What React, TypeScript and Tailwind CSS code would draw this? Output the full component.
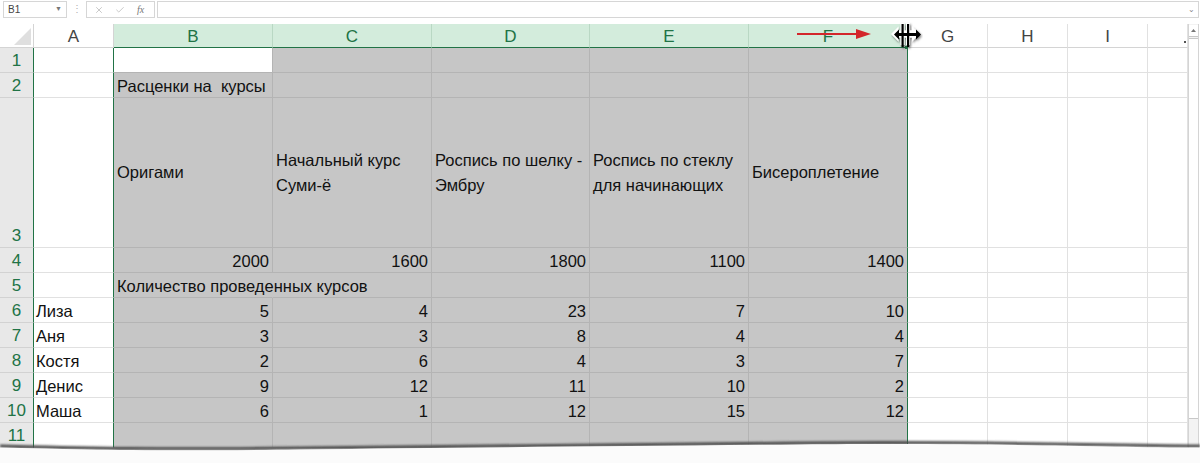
import React from 'react';
import { X, Check } from 'lucide-react';

type Align = 'left' | 'right';

interface RowData {
  n: number;
  tall?: boolean;
  a?: string;
  cells: (string | string[] | number | null)[];
  overflow?: boolean;
}

const ROWS: RowData[] = [
  { n: 1, cells: [null, null, null, null, null] },
  { n: 2, cells: ['Расценки на  курсы', null, null, null, null] },
  {
    n: 3,
    tall: true,
    cells: [
      ['Оригами'],
      ['Начальный курс', 'Суми-ё'],
      ['Роспись по шелку -', 'Эмбру'],
      ['Роспись по стеклу', 'для начинающих'],
      ['Бисероплетение'],
    ],
  },
  { n: 4, cells: [2000, 1600, 1800, 1100, 1400] },
  { n: 5, cells: ['Количество проведенных курсов', null, null, null, null], overflow: true },
  { n: 6, a: 'Лиза', cells: [5, 4, 23, 7, 10] },
  { n: 7, a: 'Аня', cells: [3, 3, 8, 4, 4] },
  { n: 8, a: 'Костя', cells: [2, 6, 4, 3, 7] },
  { n: 9, a: 'Денис', cells: [9, 12, 11, 10, 2] },
  { n: 10, a: 'Маша', cells: [6, 1, 12, 15, 12] },
  { n: 11, cells: [null, null, null, null, null] },
];

// selected columns B..F, D is a pixel narrower
const SEL_COLS = [
  { key: 'B', w: 'w-[159px]' },
  { key: 'C', w: 'w-[159px]' },
  { key: 'D', w: 'w-[158px]' },
  { key: 'E', w: 'w-[159px]' },
  { key: 'F', w: 'w-[159px]' },
];
const FREE_COLS = [
  { key: 'G', w: 'w-[80px]' },
  { key: 'H', w: 'w-[80px]' },
  { key: 'I', w: 'w-[80px]' },
  { key: '', w: 'w-[40px]' },
];

const TopBar = () => (
  <div className="flex h-[24px] items-start bg-white">
    <div className="ml-[3px] mt-[1px] flex h-[17px] w-[64px] items-center justify-between border border-[#d6d6d6] px-[4px] text-[10px] text-[#444]">
      <span>B1</span>
      <span className="text-[7px] text-[#777]">▼</span>
    </div>
    <div className="mt-[2px] w-[19px] text-center text-[10px] leading-[14px] text-[#b0b0b0]">⋮</div>
    <div className="mt-[1px] flex h-[17px] w-[69px] items-center border border-[#d6d6d6] text-[#a8a8a8]">
      <X className="ml-[7px] h-[10px] w-[10px]" strokeWidth={1.5} />
      <Check className="ml-[11px] h-[10px] w-[10px]" strokeWidth={1.5} />
      <span className="ml-[12px] font-['Liberation_Serif',serif] text-[10px] italic text-[#777]">fx</span>
    </div>
    <div className="ml-[2px] mt-[1px] flex h-[17px] w-[1042px] items-center justify-end border border-[#d6d6d6] pr-[3px] text-[8px] text-[#888]">
      ⌄
    </div>
  </div>
);

const HeaderRow = () => (
  <div className="flex h-[24px] text-[17px]">
    <div className="flex w-[34px] shrink-0 items-end justify-end border-r border-b border-r-[#d4d4d4] border-b-[#d4d4d4] bg-white pr-[2px] pb-[2px]">
      <svg width="17" height="17" viewBox="0 0 17 17">
        <polygon points="17,0 17,17 0,17" fill="#dfdfdf" />
      </svg>
    </div>
    <div className="flex w-[80px] shrink-0 items-center justify-center border-r border-b border-r-[#d4d4d4] border-b-[#d4d4d4] bg-white pt-[2px] text-[#444]">
      A
    </div>
    {SEL_COLS.map((c) => (
      <div
        key={c.key}
        className={`flex ${c.w} shrink-0 items-center justify-center border-r border-b border-r-[#b9d8c4] border-b-[#217346] bg-[#d3ecdc] pt-[2px] text-[#217346]`}
      >
        {c.key}
      </div>
    ))}
    {FREE_COLS.map((c) => (
      <div
        key={c.key || 'j'}
        className={`relative flex ${c.w} shrink-0 items-center justify-center border-r border-b border-r-[#e1e1e1] border-b-[#d4d4d4] bg-white pt-[2px] text-[#444]`}
      >
        {c.key}
        {!c.key && <span className="absolute right-[1px] bottom-[4px] h-[2px] w-[2px] bg-[#555]" />}
      </div>
    ))}
  </div>
);

const SelCell = ({
  value,
  w,
  active,
  last,
  overflow,
}: {
  value: string | string[] | number | null;
  w: string;
  active?: boolean;
  last?: boolean;
  overflow?: boolean;
}) => {
  const align: Align = typeof value === 'number' ? 'right' : 'left';
  const bg = active ? 'bg-white' : 'bg-[#c6c6c6]';
  const rightBorder = last ? 'border-r-[#217346]' : overflow ? 'border-r-[#c6c6c6]' : 'border-r-[#b4b4b4]';

  if (Array.isArray(value)) {
    return (
      <div className={`flex ${w} min-w-0 shrink-0 items-center border-r border-b ${rightBorder} border-b-[#b4b4b4] ${bg} px-[3px] leading-[25px]`}>
        <div className="whitespace-nowrap">
          {value.map((line) => (
            <div key={line}>{line}</div>
          ))}
        </div>
      </div>
    );
  }

  return (
    <div
      className={`flex ${w} min-w-0 shrink-0 items-end border-r border-b ${rightBorder} border-b-[#b4b4b4] ${bg} px-[3px] pb-[2px] leading-[18px] ${
        align === 'right' ? 'justify-end' : 'justify-start'
      }`}
    >
      {value !== null && (
        <span className={`whitespace-pre ${overflow ? 'relative z-10' : ''}`}>{value}</span>
      )}
    </div>
  );
};

const GridRow = ({ row }: { row: RowData }) => (
  <div className={`flex ${row.tall ? 'h-[150px]' : 'h-[25px]'}`}>
    <div className="flex w-[34px] shrink-0 items-end justify-center border-r border-b border-r-[#217346] border-b-[#d2d2d2] bg-[#e8e8e8] pb-[2px] text-[17px] leading-[19px] text-[#217346]">
      {row.n}
    </div>
    <div className="flex w-[80px] shrink-0 items-end border-r border-b border-r-[#217346] border-b-[#e1e1e1] bg-white px-[2px] pb-[2px] leading-[18px]">
      {row.a}
    </div>
    {row.cells.map((v, i) => (
      <SelCell
        key={i}
        value={v}
        w={SEL_COLS[i].w}
        active={row.n === 1 && i === 0}
        last={i === 4}
        overflow={row.overflow && i === 0}
      />
    ))}
    {FREE_COLS.map((c) => (
      <div key={c.key || 'j'} className={`${c.w} shrink-0 border-r border-b border-r-[#e1e1e1] border-b-[#e1e1e1] bg-white`} />
    ))}
  </div>
);

const ScrollBar = () => (
  <div className="flex w-[11px] shrink-0 flex-col border-x border-[#d4d4d4] bg-[#f3f3f3] pt-[1px]">
    <div className="flex h-[12px] items-center justify-center border-b border-[#c8c8c8] bg-white">
      <svg width="5" height="3" viewBox="0 0 5 3">
        <polygon points="2.5,0 5,3 0,3" fill="#777" />
      </svg>
    </div>
    <div className="mt-[1px] h-[381px] border-y border-[#c8c8c8] bg-white" />
  </div>
);

export default function App() {
  return (
    <div className="relative h-[463px] w-[1200px] overflow-hidden bg-white font-['Liberation_Sans',Arial,sans-serif] text-[16.5px] text-[#111]">
      <TopBar />
      <div className="flex">
        <div className="w-[1188px] shrink-0">
          <HeaderRow />
          {ROWS.map((r) => (
            <GridRow key={r.n} row={r} />
          ))}
        </div>
        <ScrollBar />
      </div>

      {/* fill handle corner at the top of the selection */}
      <div className="absolute top-[46px] left-[905px] h-[3px] w-[3px] bg-[#217346]" />

      {/* red arrow */}
      <svg className="absolute top-[27px] left-[795px]" width="78" height="14" viewBox="0 0 78 14">
        <line x1="2" y1="7" x2="64" y2="7" stroke="#d3262b" strokeWidth="2" />
        <polygon points="61,2 76,7 61,12" fill="#d3262b" />
      </svg>

      {/* column resize cursor */}
      <svg className="absolute top-[21px] left-[891px]" width="32" height="30" viewBox="0 0 32 30">
        <defs>
          <filter id="cs" x="-30%" y="-30%" width="160%" height="160%">
            <feDropShadow dx="1" dy="1.5" stdDeviation="1.2" floodColor="#000" floodOpacity="0.5" />
          </filter>
        </defs>
        <g filter="url(#cs)">
          <path
            d="M9.5,2 h4 v7.5 h1.5 v-7.5 h4 v7.5 h2 v-4 l7.5,7.5 l-7.5,7.5 v-4 h-2 v7.5 h-4 v-7.5 h-1.5 v7.5 h-4 v-7.5 h-2 v4 l-7.5,-7.5 l7.5,-7.5 v4 h2 z"
            fill="#fff"
          />
          <path
            d="M10.5,3 h2.2 v23 h-2.2 z M16,3 h2.2 v23 h-2.2 z M3,13.5 l5,-5 v3.5 h17 v-3.5 l5,5 l-5,5 v-3.5 h-17 v3.5 z"
            fill="#000"
          />
        </g>
      </svg>

      {/* torn paper edge */}
      <svg className="absolute top-[438px] left-0" width="1200" height="25" viewBox="0 0 1200 25">
        <defs>
          <filter id="ts" x="-5%" y="-100%" width="110%" height="300%">
            <feGaussianBlur stdDeviation="1.2" />
          </filter>
        </defs>
        <path
          d="M0,8 C80,10 150,12 300,10 S 600,7 800,5 S 1100,8 1200,8"
          fill="none"
          stroke="#4a4a4a"
          strokeWidth="3"
          filter="url(#ts)"
        />
        <path d="M0,9.5 C80,11.5 150,13.5 300,11.5 S 600,8.5 800,6.5 S 1100,9.5 1200,9.5 L1200,25 L0,25 Z" fill="#fbfbfb" />
      </svg>
    </div>
  );
}
